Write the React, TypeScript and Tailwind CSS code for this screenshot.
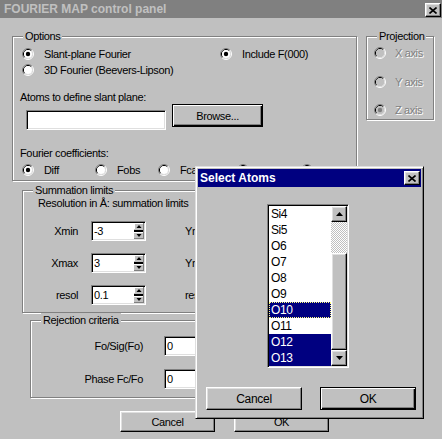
import React from 'react';

const raised =
  'bg-[#c0c0c0] border border-t-white border-l-white border-r-black border-b-black shadow-[inset_-1px_-1px_0_#808080,inset_1px_1px_0_#dfdfdf]';
const defaultBtn =
  'bg-[#c0c0c0] border border-black shadow-[inset_1px_1px_0_#fff,inset_-1px_-1px_0_#000,inset_-2px_-2px_0_#808080]';
const sunken =
  'bg-white border border-t-[#808080] border-l-[#808080] border-r-white border-b-white shadow-[inset_1px_1px_0_#000,inset_-1px_-1px_0_#dfdfdf]';

const RadioDot: React.FC<{ checked?: boolean; disabled?: boolean }> = ({ checked, disabled }) => (
  <svg width="12" height="12" viewBox="0 0 12 12" className="shrink-0">
    <path d="M9.89 2.11A5.5 5.5 0 0 0 2.11 9.89" fill="none" stroke="#808080" />
    <path d="M2.11 9.89A5.5 5.5 0 0 0 9.89 2.11" fill="none" stroke="#ffffff" />
    <path d="M9.18 2.82A4.5 4.5 0 0 0 2.82 9.18" fill="none" stroke="#000000" />
    <path d="M2.82 9.18A4.5 4.5 0 0 0 9.18 2.82" fill="none" stroke="#dfdfdf" />
    <circle cx="6" cy="6" r="4" fill={disabled ? '#c0c0c0' : '#ffffff'} />
    {checked && <circle cx="6" cy="6" r="2.2" fill={disabled ? '#808080' : '#000000'} />}
  </svg>
);

const Radio: React.FC<{ label?: string; checked?: boolean; disabled?: boolean; className?: string }> = ({
  label,
  checked,
  disabled,
  className = '',
}) => (
  <div className={`flex h-[16px] items-center whitespace-nowrap ${className}`}>
    <RadioDot checked={checked} disabled={disabled} />
    {label && (
      <span className={disabled ? 'ml-[9px] text-[#808080] [text-shadow:1px_1px_0_#fff]' : 'ml-[10px]'}>
        {label}
      </span>
    )}
  </div>
);

const Group: React.FC<{ label: string; className?: string; children?: React.ReactNode }> = ({
  label,
  className = '',
  children,
}) => (
  <div className={`relative border border-[#808080] shadow-[inset_1px_1px_0_#fff,1px_1px_0_#fff] ${className}`}>
    <span className="absolute left-[10px] top-[-8px] h-[14px] whitespace-nowrap bg-[#c0c0c0] px-[2px] leading-[14px]">
      {label}
    </span>
    {children}
  </div>
);

const CloseBox: React.FC<{ className?: string }> = ({ className = '' }) => (
  <div className={`flex h-[14px] w-[16px] shrink-0 items-center justify-center ${raised} ${className}`}>
    <svg width="8" height="7" viewBox="0 0 8 7">
      <path d="M0.5 0.5L7.5 6.5M7.5 0.5L0.5 6.5" stroke="#000" strokeWidth="1.6" />
    </svg>
  </div>
);

const Spin: React.FC<{ value: string }> = ({ value }) => (
  <div className={`flex h-[20px] w-[55px] shrink-0 ${sunken}`}>
    <span className="flex-1 pl-[2px] leading-[18px]">{value}</span>
    <svg width="10" height="16" viewBox="0 0 10 16" className="mr-[1px] mt-[1px] shrink-0">
      <rect width="10" height="16" fill="#c0c0c0" />
      <path d="M0 0.5H10M0.5 0V6" stroke="#fff" />
      <path d="M5 2L7.5 5H2.5Z" fill="#000" />
      <rect x="0" y="7" width="10" height="2" fill="#000" />
      <path d="M0 9.5H10" stroke="#fff" />
      <path d="M2.5 11H7.5L5 14Z" fill="#000" />
      <path d="M0 15.5H10M9.5 0V16" stroke="#808080" />
    </svg>
  </div>
);

const SpinRow: React.FC<{ x: string; xv: string; y: string; yv: string; className?: string }> = ({
  x,
  xv,
  y,
  yv,
  className = '',
}) => (
  <div className={`flex h-[20px] items-center ${className}`}>
    <span className="w-[55px] text-right">{x}</span>
    <div className="ml-[13px]">
      <Spin value={xv} />
    </div>
    <span className="ml-[39px] w-[40px]">{y}</span>
    <Spin value={yv} />
  </div>
);

const atoms = ['Si4', 'Si5', 'O6', 'O7', 'O8', 'O9', 'O10', 'O11', 'O12', 'O13'];
const selected = ['O10', 'O12', 'O13'];

const SelectAtoms: React.FC = () => (
  <div className="absolute left-[195px] top-[166px] h-[253px] w-[229px] border border-t-[#dfdfdf] border-l-[#dfdfdf] border-r-black border-b-black bg-[#c0c0c0] p-[2px] shadow-[inset_1px_1px_0_#fff,inset_-1px_-1px_0_#808080]">
    <div className="flex h-[18px] items-center bg-[#000080] pl-[2px] pr-[1px]">
      <span className="text-[12px] font-bold tracking-normal text-white">Select Atoms</span>
      <CloseBox className="ml-auto" />
    </div>

    <div className={`ml-[69px] mt-[17px] flex h-[164px] w-[82px] ${sunken}`}>
      <div className="ml-[1px] mt-[1px] w-[62px] text-[12px] tracking-[-0.4px]">
        {atoms.map((a) => {
          const sel = selected.includes(a);
          return (
            <div
              key={a}
              className={`h-[16px] pl-[2px] leading-[16px] ${sel ? 'bg-[#000080] text-white' : ''} ${
                a === 'O10' ? 'outline-1 -outline-offset-1 outline-dotted outline-[#ffff80]' : ''
              }`}
            >
              {a}
            </div>
          );
        })}
      </div>
      <div className="mt-[1px] flex w-[16px] flex-col">
        <div className={`flex h-[16px] items-center justify-center ${raised}`}>
          <svg width="7" height="4" viewBox="0 0 7 4">
            <path d="M3.5 0L7 4H0Z" fill="#000" />
          </svg>
        </div>
        <div className="h-[31px] bg-[repeating-conic-gradient(#c0c0c0_0%_25%,#ffffff_0%_50%)] bg-[length:2px_2px]" />
        <div className={`h-[97px] ${raised}`} />
        <div className={`flex h-[16px] items-center justify-center ${raised}`}>
          <svg width="7" height="4" viewBox="0 0 7 4">
            <path d="M0 0H7L3.5 4Z" fill="#000" />
          </svg>
        </div>
      </div>
    </div>

    <div className="ml-[8px] mt-[19px] flex text-[12px] tracking-[-0.3px]">
      <div className={`flex h-[23px] w-[96px] items-center justify-center ${raised}`}>Cancel</div>
      <div className={`ml-[18px] flex h-[23px] w-[96px] items-center justify-center ${defaultBtn}`}>OK</div>
    </div>
  </div>
);

export default function App() {
  return (
    <div className="relative h-[439px] w-[442px] overflow-hidden bg-[#c0c0c0] font-['Liberation_Sans',sans-serif] text-[11px] leading-[16px] tracking-[-0.35px] text-black">
      <div className="flex h-[18px] items-start bg-[#808080] pl-[4px] pr-[1px]">
        <span className="self-center text-[12px] font-bold tracking-normal text-[#c0c0c0]">
          FOURIER MAP control panel
        </span>
        <CloseBox className="ml-auto mt-[3px]" />
      </div>

      <div className="ml-[12px] mt-[18px] flex items-start">
        <Group label="Options" className="h-[145px] w-[345px]">
          <div className="pl-[9px] pt-[9px]">
            <div className="flex">
              <Radio checked label="Slant-plane Fourier" className="w-[198px]" />
              <Radio checked label="Include F(000)" />
            </div>
            <Radio label="3D Fourier (Beevers-Lipson)" />
            <div className="ml-[-2px] mt-[11px] h-[16px]">Atoms to define slant plane:</div>
            <div className="mt-[-1px] flex items-start">
              <div className={`ml-[4px] mt-[6px] h-[20px] w-[140px] ${sunken}`} />
              <div className={`ml-[6px] flex h-[23px] w-[91px] items-center justify-center ${defaultBtn}`}>
                Browse...
              </div>
            </div>
            <div className="ml-[-2px] mt-[15px] h-[16px]">Fourier coefficients:</div>
            <div className="mt-[1px] flex">
              <Radio checked label="Diff" className="w-[73px]" />
              <Radio label="Fobs" className="w-[63px]" />
              <Radio label="Fcalc" className="w-[79px]" />
              <Radio className="w-[64px]" />
              <Radio />
            </div>
          </div>
        </Group>

        <Group label="Projection" className="ml-[9px] h-[84px] w-[68px]">
          <div className="pl-[7px] pt-[8px]">
            <Radio disabled label="X axis" />
            <Radio disabled label="Y axis" className="mt-[13px]" />
            <Radio disabled checked label="Z axis" className="mt-[12px]" />
          </div>
        </Group>
      </div>

      <Group label="Summation limits" className="ml-[22px] mt-[9px] h-[123px] w-[335px]">
        <div className="pt-[4px]">
          <div className="ml-[15px] h-[16px]">Resolution in Å: summation limits</div>
          <SpinRow x="Xmin" xv="-3" y="Ymin" yv="-3" className="mt-[10px]" />
          <SpinRow x="Xmax" xv="3" y="Ymax" yv="3" className="mt-[12px]" />
          <SpinRow x="resol" xv="0.1" y="resol" yv="0.1" className="mt-[12px]" />
        </div>
      </Group>

      <Group label="Rejection criteria" className="ml-[30px] mt-[7px] h-[78px] w-[320px]">
        <div className="pt-[15px]">
          <div className="flex h-[20px] items-center">
            <span className="w-[112px] text-right">Fo/Sig(Fo)</span>
            <div className={`ml-[21px] h-[20px] w-[60px] pl-[2px] leading-[18px] ${sunken}`}>0</div>
          </div>
          <div className="mt-[13px] flex h-[20px] items-center">
            <span className="w-[112px] text-right">Phase Fc/Fo</span>
            <div className={`ml-[21px] h-[20px] w-[60px] pl-[2px] leading-[18px] ${sunken}`}>0</div>
          </div>
        </div>
      </Group>

      <div className="ml-[120px] mt-[13px] flex">
        <div className={`flex h-[21px] w-[95px] items-center justify-center ${raised}`}>Cancel</div>
        <div className={`ml-[19px] flex h-[21px] w-[95px] items-center justify-center ${raised}`}>OK</div>
      </div>

      <SelectAtoms />
    </div>
  );
}
